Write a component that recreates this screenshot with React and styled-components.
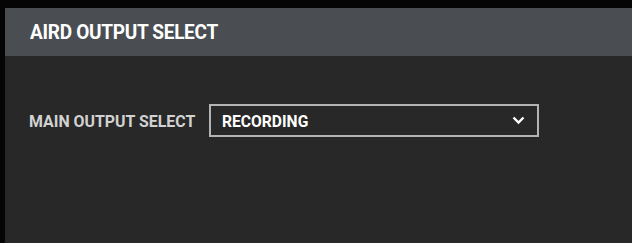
import React from "react";
import styled, { createGlobalStyle } from "styled-components";

const GlobalStyle = createGlobalStyle`
  html, body {
    margin: 0;
    padding: 0;
    background: #050505;
  }
  body {
    font-family: Roboto, "Liberation Sans", sans-serif;
  }
`;

const Screen = styled.div`
  width: 632px;
  height: 243px;
  padding: 8px 0 0 5px;
  box-sizing: border-box;
  display: flex;
  overflow: hidden;
`;

const Panel = styled.section`
  flex: 1;
  display: flex;
  flex-direction: column;
  background: #282828;
`;

const Header = styled.header`
  height: 48px;
  display: flex;
  align-items: center;
  padding-left: 25px;
  background: #4a4e52;
`;

const Title = styled.h1`
  margin: 0;
  font-size: 20px;
  font-weight: 700;
  color: #ffffff;
  letter-spacing: -0.3px;
  transform: scaleX(0.95);
  transform-origin: left center;
  white-space: nowrap;
`;

const Body = styled.div`
  padding: 48px 0 0 24px;
`;

const Row = styled.div`
  display: flex;
  align-items: center;
`;

const Label = styled.label`
  font-size: 17px;
  font-weight: 700;
  color: #d2d2d2;
  transform: scaleX(0.935);
  transform-origin: left center;
  width: 180px;
  white-space: nowrap;
`;

const Select = styled.div`
  width: 330px;
  height: 33px;
  box-sizing: border-box;
  border: 2px solid #b4b4b4;
  display: flex;
  align-items: center;
  justify-content: space-between;
  padding: 0 12px 0 11px;
`;

const Value = styled.span`
  font-size: 17px;
  font-weight: 700;
  color: #ffffff;
  transform: scaleX(0.92);
  transform-origin: left center;
`;

const Chevron = () => (
  <svg width="13" height="9" viewBox="0 0 13 9">
    <path d="M1.5 1.5 L6.5 6.5 L11.5 1.5" fill="none" stroke="#fff" strokeWidth="2.4" />
  </svg>
);

export default function App() {
  return (
    <>
      <GlobalStyle />
      <Screen>
        <Panel>
          <Header>
            <Title>AIRD OUTPUT SELECT</Title>
          </Header>
          <Body>
            <Row>
              <Label>MAIN OUTPUT SELECT</Label>
              <Select>
                <Value>RECORDING</Value>
                <Chevron />
              </Select>
            </Row>
          </Body>
        </Panel>
      </Screen>
    </>
  );
}
